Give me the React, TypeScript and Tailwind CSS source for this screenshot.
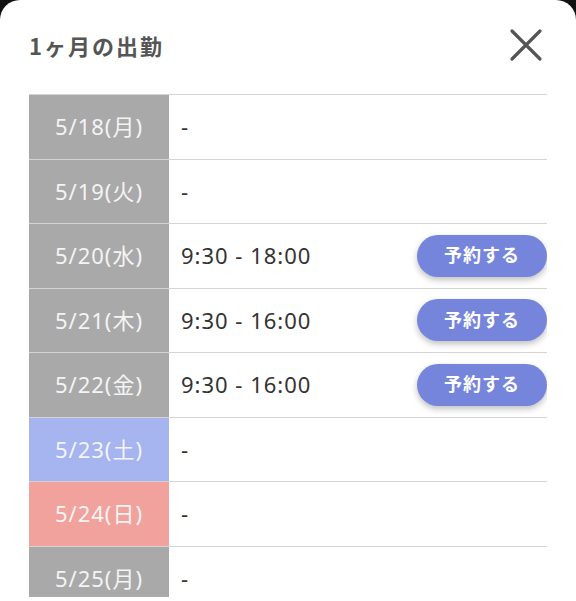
import React from 'react';

type Day = {
  date: string;
  time: string | null;
  kind: 'weekday' | 'sat' | 'sun';
};

const days: Day[] = [
  { date: '5/18(月)', time: null, kind: 'weekday' },
  { date: '5/19(火)', time: null, kind: 'weekday' },
  { date: '5/20(水)', time: '9:30 - 18:00', kind: 'weekday' },
  { date: '5/21(木)', time: '9:30 - 16:00', kind: 'weekday' },
  { date: '5/22(金)', time: '9:30 - 16:00', kind: 'weekday' },
  { date: '5/23(土)', time: null, kind: 'sat' },
  { date: '5/24(日)', time: null, kind: 'sun' },
  { date: '5/25(月)', time: null, kind: 'weekday' },
];

const dateBg = {
  weekday: 'bg-[#a9a9a9]',
  sat: 'bg-[#a6b4f0]',
  sun: 'bg-[#f2a29c]',
};

export default function App() {
  return (
    <div
      className="w-[576px] h-[601px] bg-[#111] overflow-hidden"
      style={{ fontFamily: '"Noto Sans", "Noto Sans CJK JP", sans-serif' }}
    >
      <div className="h-full bg-white rounded-t-[20px] px-[29px]">
        <div className="flex items-center justify-between h-[94px] pb-[4px]">
          <h2
            className="text-[22px] font-bold text-[#555] tracking-[2px]"
            style={{ fontFamily: '"Noto Sans CJK JP", sans-serif' }}
          >
            1ヶ月の出勤
          </h2>
          <button className="w-[34px] h-[34px] mr-[4px] flex items-center justify-center">
            <svg width="34" height="34" viewBox="0 0 34 34">
              <path d="M3 3 L31 31 M31 3 L3 31" stroke="#555" strokeWidth="3.2" strokeLinecap="round" />
            </svg>
          </button>
        </div>

        <div className="h-[503px] overflow-hidden border-t border-[#d4d4d4]">
          {days.map((d) => (
            <div key={d.date} className="flex h-[64.5px] border-b border-[#d4d4d4]">
              <div
                className={`w-[140px] shrink-0 flex items-center justify-center text-[22px] tracking-[1px] text-[#f4f4f4] ${dateBg[d.kind]}`}
              >
                {d.date}
              </div>
              <div className="flex-1 flex items-center justify-between pl-[12px]">
                <span className="text-[22px] tracking-[1px] text-[#333]">{d.time ?? '-'}</span>
                {d.time && (
                  <button className="w-[130px] h-[42px] rounded-full bg-[#7685dc] text-white text-[18px] font-bold tracking-[1px] shadow-[0_3px_6px_rgba(0,0,0,0.25)]">
                    予約する
                  </button>
                )}
              </div>
            </div>
          ))}
        </div>
      </div>
    </div>
  );
}
